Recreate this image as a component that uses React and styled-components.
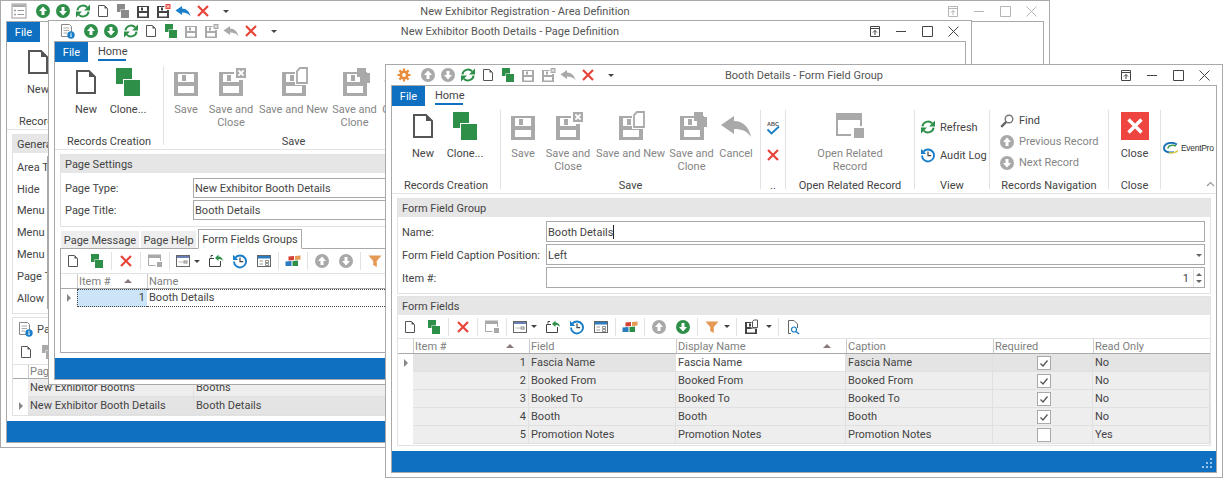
import React from "react";
import styled, { createGlobalStyle } from "styled-components";

const GlobalStyle = createGlobalStyle`
  html, body { margin: 0; padding: 0; background: #fff; }
  body { font-family: Roboto, "Noto Sans", sans-serif; font-size: 11px; color: #444; }
  * { box-sizing: border-box; }
`;

const BLUE = "#0f6fc0";
const GREEN = "#2e8f49";
const GREY = "#a9a9a9";
const DARK = "#555";
const RED = "#e8443a";

// --- icons, all in a 16x16 box ---
const floppy = (c) => (
  <>
    <path fill={c} fillRule="evenodd" d="M2 3h12v12H2z M4 4h8v4H4z M4 10h8v3.5H4z" />
    <rect x="6" y="4.5" width="2" height="3" fill={c} />
  </>
);
const circleArrow = (c, down) => (
  <>
    <circle cx="8" cy="8" r="7" fill={c} />
    <path fill="#fff" d={down ? "M8 12.5L12 8H9.5V4h-3v4H4z" : "M8 3.5L12 8H9.5v4h-3V8H4z"} />
  </>
);
const icons = {
  doc: (c = DARK) => (
    <>
      <path d="M3.5 2.5H9.5L12.5 5.5V13.5H3.5Z" fill="#fff" stroke={c} strokeWidth="1" />
      <path d="M9.5 2.5V5.5H12.5Z" fill={c} />
    </>
  ),
  clone: (c = GREEN) => (
    <>
      <rect x="2" y="1" width="8" height="8" fill={c} />
      <rect x="5.5" y="6.5" width="9" height="9" fill="#fff" />
      <rect x="6" y="7" width="8" height="8" fill={c} />
    </>
  ),
  save: (c = GREY) => floppy(c),
  saveClose: (c = GREY) => (
    <>
      {floppy(c)}
      <rect x="9.5" y="0.5" width="7" height="6.5" fill="#fff" />
      <rect x="10.5" y="1" width="5" height="5" fill={c} />
      <path d="M11.7 2.2l2.6 2.6M14.3 2.2l-2.6 2.6" stroke="#fff" strokeWidth="1" />
    </>
  ),
  saveCloseRed: () => (
    <>
      {floppy("#444")}
      <rect x="9.5" y="0.5" width="7" height="6.5" fill="#fff" />
      <rect x="10.5" y="1" width="5" height="5" fill={RED} />
      <path d="M11.7 2.2l2.6 2.6M14.3 2.2l-2.6 2.6" stroke="#fff" strokeWidth="1" />
    </>
  ),
  saveNew: (c = GREY) => (
    <>
      {floppy(c)}
      <rect x="8.5" y="0" width="7.5" height="9.5" fill="#fff" />
      <path d="M9.5 8.5V2.5L11 1H14.5V8.5Z" fill="#fff" stroke={c} strokeWidth="0.9" />
    </>
  ),
  saveClone: (c = GREY) => (
    <>
      {floppy(c)}
      <rect x="9" y="1" width="4.5" height="4.5" fill={c} />
      <rect x="10.5" y="3.5" width="5" height="5" fill={c} />
    </>
  ),
  reply: (c = GREY) => (
    <path fill={c} d="M0.5 7.5L7 3V5.5C11.5 5.5 14.5 8.5 15.5 13.5C13.5 10.5 11 9.5 7 9.5V12Z" />
  ),
  x: (c = RED) => <path d="M3 3L13 13M13 3L3 13" stroke={c} strokeWidth="2.2" fill="none" />,
  up: (c = GREEN) => circleArrow(c, false),
  down: (c = GREEN) => circleArrow(c, true),
  refresh: (c = GREEN) => (
    <>
      <path d="M2.4 7.4A5.7 5.7 0 0 1 12.2 4.4M13.6 8.6A5.7 5.7 0 0 1 3.8 11.6" stroke={c} strokeWidth="2" fill="none" />
      <path fill={c} d="M15 1.5V7.5H9ZM1 14.5V8.5H7Z" />
    </>
  ),
  clock: () => (
    <>
      <path d="M3.4 4.6A6 6 0 1 1 2 8.5" stroke="#1a7fc8" strokeWidth="1.9" fill="none" />
      <path fill="#1a7fc8" d="M1 1.8V7H6.2Z" />
      <path d="M8 4.5V8.7H11.2" stroke="#444" strokeWidth="1.2" fill="none" />
    </>
  ),
  find: () => (
    <>
      <circle cx="10" cy="6" r="3.8" fill="none" stroke="#777" strokeWidth="1.4" />
      <path d="M7.2 8.8L2.2 13.8" stroke="#666" strokeWidth="2.4" />
    </>
  ),
  related: (c = GREY) => (
    <>
      <rect x="1" y="1.5" width="13" height="3.5" fill={c} />
      <path d="M1.5 5V12.5H8.5M13.5 5V8" stroke={c} strokeWidth="1" fill="none" />
      <rect x="10" y="9" width="5" height="5" fill={c} />
    </>
  ),
  tabWin: () => (
    <>
      <rect x="1.5" y="2.5" width="13" height="11" fill="#fff" stroke="#666" />
      <rect x="2" y="3" width="12" height="2" fill="#6a7fb5" />
      <rect x="9" y="8" width="3" height="2" fill="none" stroke="#888" />
      <path d="M3.5 9H8" stroke="#bbb" />
    </>
  ),
  exportTo: () => (
    <>
      <path d="M1.5 5.5V13.5H12.5V8M1.5 5.5H6" stroke="#444" fill="none" />
      <path d="M3 4.5V2.5H5" stroke="#444" fill="none" />
      <path fill={GREEN} d="M7 5L10.5 1.5V3.5C13 3.5 14.5 5 15 8C13.8 6.5 12.5 6 10.5 6V8Z" />
    </>
  ),
  list: () => (
    <>
      <rect x="1.5" y="2.5" width="13" height="11" fill="#fff" stroke="#666" />
      <rect x="2" y="3" width="12" height="2.5" fill="#2a7bc0" />
      <path d="M3.5 8H7M3.5 11H7" stroke="#999" />
      <path d="M9.5 7.5h3v2h-3zM9.5 10.5h3v2h-3z" fill="none" stroke="#777" strokeWidth="0.8" />
    </>
  ),
  blocks: () => (
    <>
      <path fill="#d43f33" d="M3.5 3.5L9 3V7L3.5 7.5Z" />
      <path fill="#e59a53" d="M10 3L15.5 2.5V6.5L10 7Z" />
      <path fill="#2a7bc0" d="M0.5 8.5L6.5 8V13H0.5Z" />
      <path fill={GREEN} d="M7.5 8L13 7.5V13H7.5Z" />
    </>
  ),
  filter: () => <path fill="#e59a53" d="M1.5 2.5H14.5L9.8 8V14L6.2 12V8Z" />,
  searchDoc: () => (
    <>
      <path d="M3.5 1.5H9L12.5 5V9M6 14.5H3.5V1.5" fill="none" stroke="#666" />
      <circle cx="9" cy="10.5" r="2.5" fill="#fff" stroke="#1a7fc8" strokeWidth="1.2" />
      <path d="M11 12.5L14 15" stroke="#1a7fc8" strokeWidth="1.5" />
    </>
  ),
  form: () => (
    <>
      <rect x="1" y="1" width="14" height="14" fill="#fff" stroke="#999" />
      <rect x="1.5" y="1.5" width="13" height="2.5" fill="#aaa" />
      <circle cx="4" cy="7.5" r="1" fill="#999" />
      <circle cx="4" cy="11.5" r="1" fill="#999" />
      <path d="M6.5 7.5H13M6.5 11.5H13" stroke="#999" />
    </>
  ),
  pageInfo: () => (
    <>
      <path d="M2.5 1.5H10.5L12.5 3.5V13.5H2.5Z" fill="#fff" stroke="#888" />
      <path d="M4.5 5H10M4.5 7.5H10M4.5 10H8" stroke="#aaa" />
      <circle cx="12" cy="12" r="3.7" fill="#1a7fc8" />
      <path d="M12 11.3V14M12 9.7V10.7" stroke="#fff" strokeWidth="1.1" />
    </>
  ),
  gear: () => (
    <>
      <path d="M8 1.5V14.5M1.5 8H14.5M3.4 3.4L12.6 12.6M12.6 3.4L3.4 12.6" stroke="#e88d3d" strokeWidth="2.2" />
      <circle cx="8" cy="8" r="4.6" fill="#e88d3d" />
      <circle cx="8" cy="8" r="1.9" fill="#fff" />
    </>
  ),
  spell: () => (
    <>
      <text x="8" y="6" textAnchor="middle" fontSize="5.5" fontWeight="700" fontFamily="Liberation Sans" fill="#555">ABC</text>
      <path d="M2.5 9.5L6.5 13.5L14 6.5" stroke="#1a7fc8" strokeWidth="1.8" fill="none" />
    </>
  ),
};

const IconSvg = styled.svg`
  display: block;
  flex: none;
`;

const Icon = ({ name, size = 16, color }) => (
  <IconSvg width={size} height={size} viewBox="0 0 16 16">
    {icons[name](color)}
  </IconSvg>
);

// --- desktop and windows ---
const Desktop = styled.div`
  position: relative;
  width: 1223px;
  height: 479px;
  overflow: hidden;
`;

const Win = styled.div`
  position: absolute;
  left: ${(p) => p.$left}px;
  top: ${(p) => p.$top}px;
  width: ${(p) => p.$width}px;
  height: ${(p) => p.$height}px;
  background: #fff;
  border: 1px solid ${GREY};
  display: flex;
  flex-direction: column;
  padding: 0 5px 4px;
`;

const TitleBar = styled.div`
  height: 20px;
  flex: none;
  display: grid;
  grid-template-columns: 1fr auto 1fr;
  align-items: center;
`;

const Qat = styled.div`
  display: flex;
  align-items: center;
  padding-left: 3px;
`;

const QatBtn = styled.div`
  width: 20px;
  height: 20px;
  display: flex;
  align-items: center;
  justify-content: center;
  margin-right: ${(p) => p.$gap || 0}px;
`;

const Caret = styled.span`
  display: block;
  width: 0;
  height: 0;
  border-left: 3.5px solid transparent;
  border-right: 3.5px solid transparent;
  border-top: 3.5px solid #444;
`;

const QatCaret = styled.div`
  width: 20px;
  margin-left: 3px;
  display: flex;
  justify-content: center;
`;

const TitleText = styled.div`
  color: #555;
  white-space: nowrap;
`;

const WinBtns = styled.div`
  justify-self: end;
  display: flex;
  color: ${(p) => (p.$inactive ? "#b5b5b5" : "#444")};
`;

const WinBtn = styled.div`
  width: 26px;
  height: 20px;
  display: flex;
  align-items: center;
  justify-content: center;
`;

const Frame = styled.div`
  flex: 1;
  min-height: 0;
  border: 1px solid ${GREY};
  display: flex;
  flex-direction: column;
  overflow: hidden;
`;

const StatusBar = styled.div`
  height: 21px;
  flex: none;
  margin-top: auto;
  background: ${BLUE};
  display: flex;
  justify-content: flex-end;
  align-items: flex-end;
  padding: 0 3px 3px 0;
`;

// --- ribbon ---
const Tabs = styled.div`
  height: 20px;
  flex: none;
  display: flex;
`;

const FileTab = styled.div`
  width: 33px;
  background: ${BLUE};
  color: #fff;
  display: flex;
  align-items: center;
  justify-content: center;
`;

const HomeTab = styled.div`
  margin-left: 10px;
  width: 28px;
  height: 19px;
  line-height: 19px;
  text-align: center;
  color: #444;
  border-bottom: 2px solid ${BLUE};
`;

const RibbonBar = styled.div`
  height: 88px;
  flex: none;
  padding-top: 4px;
  display: flex;
  border-bottom: 1px solid #e2e2e2;
`;

const Group = styled.div`
  width: ${(p) => p.$w}px;
  height: 79px;
  flex: none;
  display: flex;
  flex-direction: column;
  border-right: ${(p) => (p.$last ? "none" : "1px solid #e2e2e2")};
`;

const GroupBody = styled.div`
  height: 68px;
  flex: none;
  display: flex;
  flex-direction: ${(p) => (p.$stack ? "column" : "row")};
  padding-left: ${(p) => p.$pad || 0}px;
  padding-top: ${(p) => p.$top || 0}px;
`;

const GroupCaption = styled.div`
  height: 11px;
  line-height: 16px;
  text-align: center;
  white-space: nowrap;
  color: #444;
  position: relative;
`;

const LargeBtn = styled.div`
  width: ${(p) => p.$w}px;
  flex: none;
  display: flex;
  flex-direction: column;
  align-items: center;
`;

const LargeLabel = styled.div`
  margin-top: 5px;
  line-height: 13px;
  text-align: center;
  white-space: pre;
  color: ${(p) => (p.$off ? "#858585" : "#444")};
`;

const SmallBtn = styled.div`
  height: ${(p) => p.$h}px;
  display: flex;
  align-items: center;
  gap: 4px;
  white-space: nowrap;
  justify-content: ${(p) => (p.$only ? "center" : "flex-start")};
  color: ${(p) => (p.$off ? "#858585" : "#444")};
`;

const LogoBox = styled.div`
  display: flex;
  align-items: center;
  gap: 1px;
  height: 20px;
  margin-top: 28px;
  padding-left: 2px;
`;

const LogoMark = styled.svg`
  flex: none;
`;

const LogoText = styled.span`
  font-family: "Liberation Sans", sans-serif;
  font-size: 8.5px;
  letter-spacing: -0.3px;
  color: #333;
`;

const CloseMark = styled.svg`
  display: block;
`;

const Collapse = styled.svg`
  position: absolute;
  right: 1px;
  top: 3px;
`;

const saveButtons = [
  ["save", "Save", 44],
  ["saveClose", "Save and\nClose", 46],
  ["saveNew", "Save and New", 79],
  ["saveClone", "Save and\nClone", 43],
  ["reply", "Cancel", 46],
];

const Ribbon = ({ full, noSave }) => (
  <>
    <Tabs>
      <FileTab>File</FileTab>
      <HomeTab>Home</HomeTab>
    </Tabs>
    <RibbonBar>
      <Group $w={109}>
        <GroupBody $pad={10}>
          <LargeBtn $w={42}>
            <Icon name="doc" size={32} />
            <LargeLabel>New</LargeLabel>
          </LargeBtn>
          <LargeBtn $w={42}>
            <Icon name="clone" size={32} />
            <LargeLabel>Clone...</LargeLabel>
          </LargeBtn>
        </GroupBody>
        <GroupCaption>Records Creation</GroupCaption>
      </Group>
      {!noSave && (
        <Group $w={260}>
          <GroupBody>
            {saveButtons.map(([name, label, w]) => (
              <LargeBtn key={name} $w={w}>
                <Icon name={name} size={32} />
                <LargeLabel $off>{label}</LargeLabel>
              </LargeBtn>
            ))}
          </GroupBody>
          <GroupCaption>Save</GroupCaption>
        </Group>
      )}
      {full && (
        <>
          <Group $w={25}>
            <GroupBody $stack $top={4}>
              <SmallBtn $h={28} $only><Icon name="spell" /></SmallBtn>
              <SmallBtn $h={26} $only><Icon name="x" /></SmallBtn>
            </GroupBody>
            <GroupCaption>..</GroupCaption>
          </Group>
          <Group $w={129}>
            <GroupBody>
              <LargeBtn $w={128}>
                <Icon name="related" size={32} />
                <LargeLabel $off>{"Open Related\nRecord"}</LargeLabel>
              </LargeBtn>
            </GroupBody>
            <GroupCaption>Open Related Record</GroupCaption>
          </Group>
          <Group $w={75}>
            <GroupBody $stack $pad={5} $top={3}>
              <SmallBtn $h={28}><Icon name="refresh" />Refresh</SmallBtn>
              <SmallBtn $h={28}><Icon name="clock" />Audit Log</SmallBtn>
            </GroupBody>
            <GroupCaption>View</GroupCaption>
          </Group>
          <Group $w={119}>
            <GroupBody $stack $pad={9}>
              <SmallBtn $h={21}><Icon name="find" />Find</SmallBtn>
              <SmallBtn $h={21} $off><Icon name="up" color={GREY} />Previous Record</SmallBtn>
              <SmallBtn $h={21} $off><Icon name="down" color={GREY} />Next Record</SmallBtn>
            </GroupBody>
            <GroupCaption>Records Navigation</GroupCaption>
          </Group>
          <Group $w={52}>
            <GroupBody>
              <LargeBtn $w={51}>
                <CloseMark width="32" height="32" viewBox="0 0 32 32">
                  <rect x="2" y="2" width="28" height="28" fill="#ee4540" />
                  <path d="M9.5 9.5L22.5 22.5M22.5 9.5L9.5 22.5" stroke="#fff" strokeWidth="3.4" />
                </CloseMark>
                <LargeLabel>Close</LargeLabel>
              </LargeBtn>
            </GroupBody>
            <GroupCaption>Close</GroupCaption>
          </Group>
          <Group $w={55} $last>
            <GroupBody $stack>
              <LogoBox>
                <LogoMark width="17" height="12" viewBox="0 0 17 12">
                  <path d="M14 2.5C10 -0.5 2 0.5 1 5.5C0.5 9 5 11.5 11 10" fill="none" stroke="#1e73b8" strokeWidth="1.8" />
                  <path d="M5 6.5C5 3.5 10 2.5 13 4" fill="none" stroke="#3f9a4a" strokeWidth="1.6" />
                  <path d="M6 10.5C9 11.5 13 10.5 15 8.5" fill="none" stroke="#d8c33a" strokeWidth="1.4" />
                </LogoMark>
                <LogoText>EventPro</LogoText>
              </LogoBox>
            </GroupBody>
            <GroupCaption>
              <Collapse width="9" height="6" viewBox="0 0 9 6">
                <path d="M1 5L4.5 1.5L8 5" fill="none" stroke="#999" strokeWidth="1.2" />
              </Collapse>
            </GroupCaption>
          </Group>
        </>
      )}
    </RibbonBar>
  </>
);

// --- panels and forms ---
const Body = styled.div`
  flex: 1;
  min-height: 0;
  display: flex;
  flex-direction: column;
  gap: ${(p) => p.$gap || 0}px;
  padding: 4px 5px 5px;
`;

const Panel = styled.div`
  flex: ${(p) => (p.$grow ? 1 : "none")};
  height: ${(p) => (p.$h ? `${p.$h}px` : "auto")};
  border: 1px solid #e2e2e2;
  display: flex;
  flex-direction: column;
  overflow: hidden;
`;

const PanelHead = styled.div`
  height: 18px;
  flex: none;
  background: #e6e6e6;
  line-height: 19px;
  padding-left: 4px;
  color: #444;
  white-space: nowrap;
`;

const FormGrid = styled.div`
  display: grid;
  grid-template-columns: ${(p) => p.$label}px 1fr;
  row-gap: ${(p) => p.$gap}px;
  padding: ${(p) => p.$top}px 5px ${(p) => p.$bottom}px 4px;
  align-items: center;
`;

const FieldLabel = styled.div`
  white-space: nowrap;
  overflow: hidden;
  padding-top: 1px;
`;

const Input = styled.div`
  height: ${(p) => p.$h || 21}px;
  border: 1px solid ${GREY};
  padding: 1px 0 0 1px;
  color: #444;
  display: flex;
  align-items: center;
`;

const TextCaret = styled.span`
  display: inline-block;
  width: 1px;
  height: 14px;
  background: #222;
`;

const InputEnd = styled.div`
  margin-left: auto;
  display: flex;
  align-items: center;
  height: 100%;
`;

const Spin = styled.div`
  width: 11px;
  height: 100%;
  margin-left: 4px;
  border-left: ${(p) => (p.$plain ? "none" : "1px solid #e2e2e2")};
  display: flex;
  flex-direction: column;
  align-items: center;
  justify-content: ${(p) => (p.$plain ? "center" : "space-around")};
  padding: 2px 0;
`;

const SpinUp = styled.span`
  border-left: 3px solid transparent;
  border-right: 3px solid transparent;
  border-bottom: 3px solid #666;
`;

const SpinDown = styled.span`
  border-left: 3px solid transparent;
  border-right: 3px solid transparent;
  border-top: 3px solid #666;
`;

const TabStrip = styled.div`
  display: flex;
  align-items: flex-end;
  height: 18px;
  flex: none;
  margin-top: 3px;
  padding-left: 1px;
`;

const PageTab = styled.div`
  width: ${(p) => p.$w}px;
  height: ${(p) => (p.$on ? 20 : 17)}px;
  line-height: 19px;
  text-align: center;
  margin-right: ${(p) => (p.$on ? 0 : 2)}px;
  margin-bottom: ${(p) => (p.$on ? -1 : 0)}px;
  background: ${(p) => (p.$on ? "#fff" : "#eee")};
  border: ${(p) => (p.$on ? `1px solid ${GREY}` : "none")};
  border-bottom: ${(p) => (p.$on ? "1px solid #fff" : "none")};
  position: relative;
  white-space: nowrap;
`;

const TabPage = styled.div`
  flex: 1;
  min-height: 0;
  border: 1px solid ${GREY};
  overflow: hidden;
`;

// --- toolbar ---
const ToolRow = styled.div`
  height: ${(p) => p.$h}px;
  flex: none;
  display: flex;
  align-items: center;
  white-space: nowrap;
`;

const ToolBtn = styled.div`
  width: ${(p) => p.$w || 24}px;
  height: 18px;
  flex: none;
  display: flex;
  align-items: center;
  justify-content: center;
`;

const ToolSep = styled.div`
  width: 5px;
  height: 18px;
  flex: none;
  display: flex;
  justify-content: center;
  &::before {
    content: "";
    width: 1px;
    background: #e2e2e2;
  }
`;

const ToolCaret = styled.div`
  width: 6px;
  flex: none;
  margin: 0 4px 0 ${(p) => p.$ml || 0}px;
  display: flex;
  justify-content: center;
`;

const GridToolbar = ({ h, downOn }) => (
  <ToolRow $h={h}>
    <ToolBtn><Icon name="doc" /></ToolBtn>
    <ToolBtn><Icon name="clone" /></ToolBtn>
    <ToolSep />
    <ToolBtn><Icon name="x" /></ToolBtn>
    <ToolSep />
    <ToolBtn><Icon name="related" /></ToolBtn>
    <ToolSep />
    <ToolBtn $w={22}><Icon name="tabWin" /></ToolBtn>
    <ToolCaret><Caret /></ToolCaret>
    <ToolBtn><Icon name="exportTo" /></ToolBtn>
    <ToolBtn><Icon name="clock" /></ToolBtn>
    <ToolBtn><Icon name="list" /></ToolBtn>
    <ToolSep />
    <ToolBtn><Icon name="blocks" /></ToolBtn>
    <ToolSep />
    <ToolBtn><Icon name="up" color={GREY} /></ToolBtn>
    <ToolBtn><Icon name="down" color={downOn ? GREEN : GREY} /></ToolBtn>
    <ToolSep />
    <ToolBtn><Icon name="filter" /></ToolBtn>
    <ToolCaret><Caret /></ToolCaret>
    <ToolSep />
    <ToolBtn><Icon name="saveNew" color="#444" /></ToolBtn>
    <ToolCaret $ml={3}><Caret /></ToolCaret>
    <ToolSep />
    <ToolBtn><Icon name="searchDoc" /></ToolBtn>
  </ToolRow>
);

// --- data grid ---
const GridHead = styled.div`
  display: grid;
  grid-template-columns: ${(p) => p.$cols};
  height: 16px;
  border-bottom: 1px solid ${GREY};
  border-top: 1px solid #e2e2e2;
  color: #808080;
`;

const HeadCell = styled.div`
  display: flex;
  align-items: center;
  justify-content: space-between;
  padding: 0 ${(p) => (p.$sort ? 15 : 0)}px 0 1px;
  line-height: 13px;
  white-space: nowrap;
  overflow: hidden;
  border-left: ${(p) => (p.$first ? "none" : "1px solid #ccc")};
`;

const SortUp = styled.span`
  border-left: 4px solid transparent;
  border-right: 4px solid transparent;
  border-bottom: 4px solid #8a7a7a;
`;

const GridRow = styled.div`
  display: grid;
  grid-template-columns: ${(p) => p.$cols};
  height: 18px;
`;

const Marker = styled.div`
  background: #fff;
  display: flex;
  align-items: center;
  justify-content: center;
  &::before {
    content: "";
    display: ${(p) => (p.$on ? "block" : "none")};
    border-top: 4px solid transparent;
    border-bottom: 4px solid transparent;
    border-left: 4px solid #888;
  }
`;

const Cell = styled.div`
  background: ${(p) => (p.$white ? "#fff" : p.$sel ? "#e4e4e4" : "#eee")};
  border-right: 1px solid #e0e0e0;
  border-bottom: 1px solid #e0e0e0;
  line-height: 17px;
  padding: 0 ${(p) => (p.$right ? 2 : 0)}px 0 ${(p) => (p.$right ? 0 : 2)}px;
  text-align: ${(p) => (p.$right ? "right" : "left")};
  color: #444;
  white-space: nowrap;
  overflow: hidden;
`;

const CheckCell = styled(Cell)`
  display: flex;
  align-items: center;
  justify-content: center;
`;

const CheckBox = styled.div`
  width: 14px;
  height: 14px;
  background: #fff;
  border: 1px solid ${GREY};
  display: flex;
  align-items: center;
  justify-content: center;
`;

const ActiveCell = styled.div`
  background: ${(p) => (p.$blue ? "#cce4f7" : "#fff")};
  border-top: 1px dotted #444;
  border-bottom: 1px dotted #444;
  border-left: ${(p) => (p.$blue ? "1px dotted #444" : "none")};
  line-height: 15px;
  padding: 0 ${(p) => (p.$blue ? 2 : 0)}px 0 ${(p) => (p.$blue ? 0 : 2)}px;
  text-align: ${(p) => (p.$blue ? "right" : "left")};
  white-space: nowrap;
`;

const fieldCols = "15px 116px 147px 170px 147px 100px 1fr";
const fieldRows = [
  [1, "Fascia Name", "Fascia Name", "Fascia Name", true, "No"],
  [2, "Booked From", "Booked From", "Booked From", true, "No"],
  [3, "Booked To", "Booked To", "Booked To", true, "No"],
  [4, "Booth", "Booth", "Booth", true, "No"],
  [5, "Promotion Notes", "Promotion Notes", "Promotion Notes", false, "Yes"],
];

const WinButtons = ({ inactive }) => (
  <WinBtns $inactive={inactive}>
    <WinBtn>
      <svg width="12" height="11" viewBox="0 0 12 11" fill="none" stroke="currentColor">
        <path d="M1.5 .5H10.5V10.5H1.5ZM1.5 2.5H10.5" />
        <path d="M6 9V4.5M4 6.5L6 4.5L8 6.5" />
      </svg>
    </WinBtn>
    <WinBtn>
      <svg width="12" height="11" viewBox="0 0 12 11" stroke="currentColor"><path d="M1 5.5H11" /></svg>
    </WinBtn>
    <WinBtn>
      <svg width="11" height="11" viewBox="0 0 11 11" fill="none" stroke="currentColor"><path d="M.5 .5H10.5V10.5H.5Z" /></svg>
    </WinBtn>
    <WinBtn>
      <svg width="11" height="11" viewBox="0 0 11 11" stroke="currentColor"><path d="M.5 .5L10.5 10.5M10.5 .5L.5 10.5" /></svg>
    </WinBtn>
  </WinBtns>
);

const Title = ({ app, items, text, inactive }) => (
  <TitleBar>
    <Qat>
      <QatBtn $gap={4}><Icon name={app} /></QatBtn>
      {items.map(([name, color], i) => (
        <QatBtn key={i}><Icon name={name} color={color} /></QatBtn>
      ))}
      <QatCaret><Caret /></QatCaret>
    </Qat>
    <TitleText>{text}</TitleText>
    <WinButtons inactive={inactive} />
  </TitleBar>
);

const Grip = () => (
  <svg width="11" height="11" viewBox="0 0 11 11" fill="#9cc3e6">
    <rect x="8" y="0" width="2" height="2" />
    <rect x="4" y="4" width="2" height="2" />
    <rect x="8" y="4" width="2" height="2" />
    <rect x="0" y="8" width="2" height="2" />
    <rect x="4" y="8" width="2" height="2" />
    <rect x="8" y="8" width="2" height="2" />
  </svg>
);

const areaLabels = ["Area Type:", "Hide", "Menu Caption:", "Menu Title:", "Menu Icon:", "Page Title:", "Allow Edit:"];

export default function App() {
  return (
    <Desktop>
      <GlobalStyle />

      {/* back window */}
      <Win $left={0} $top={0} $width={1050} $height={448}>
        <Title
          app="form"
          text="New Exhibitor Registration - Area Definition"
          inactive
          items={[
            ["up"], ["down"], ["refresh"], ["doc"], ["clone", "#8a8a8a"], ["save", "#444"],
            ["saveCloseRed"], ["reply", "#1a7fc8"], ["x"],
          ]}
        />
        <Frame>
          <Ribbon noSave />
          <Body $gap={3}>
            <Panel $h={180}>
              <PanelHead>General</PanelHead>
              <FormGrid $label={30} $gap={0} $top={3} $bottom={0}>
                {areaLabels.map((l) => (
                  <React.Fragment key={l}>
                    <FieldLabel>{l}</FieldLabel>
                    <Input $h={21.8} />
                  </React.Fragment>
                ))}
              </FormGrid>
            </Panel>
            <Panel $grow>
              <ToolRow $h={22}>
                <ToolBtn $w={24}><Icon name="pageInfo" /></ToolBtn>
                Pages
              </ToolRow>
              <ToolRow $h={24}>
                <ToolBtn $w={26}><Icon name="doc" /></ToolBtn>
                <ToolBtn $w={18}><Icon name="clone" color={GREY} /></ToolBtn>
              </ToolRow>
              <GridHead $cols="15px 166px 1fr">
                <HeadCell $first />
                <HeadCell>Page Type</HeadCell>
                <HeadCell>Page Title</HeadCell>
              </GridHead>
              <GridRow $cols="15px 166px 1fr">
                <Marker />
                <Cell>New Exhibitor Booths</Cell>
                <Cell>Booths</Cell>
              </GridRow>
              <GridRow $cols="15px 166px 1fr">
                <Marker $on />
                <Cell $sel>New Exhibitor Booth Details</Cell>
                <Cell $sel>Booth Details</Cell>
              </GridRow>
            </Panel>
          </Body>
          <StatusBar />
        </Frame>
      </Win>

      {/* middle window */}
      <Win $left={48} $top={20} $width={924} $height={365}>
        <Title
          app="pageInfo"
          text="New Exhibitor Booth Details - Page Definition"
          items={[
            ["up"], ["down"], ["refresh"], ["doc"], ["clone"], ["save", GREY],
            ["saveClose", GREY], ["reply", GREY], ["x"],
          ]}
        />
        <Frame>
          <Ribbon />
          <Body>
            <Panel>
              <PanelHead>Page Settings</PanelHead>
              <FormGrid $label={128} $gap={2} $top={5} $bottom={6}>
                <FieldLabel>Page Type:</FieldLabel>
                <Input $h={20}>New Exhibitor Booth Details</Input>
                <FieldLabel>Page Title:</FieldLabel>
                <Input $h={20}>Booth Details</Input>
              </FormGrid>
            </Panel>
            <TabStrip>
              <PageTab $w={78}>Page Message</PageTab>
              <PageTab $w={55}>Page Help</PageTab>
              <PageTab $on $w={104}>Form Fields Groups</PageTab>
            </TabStrip>
            <TabPage>
              <GridToolbar h={24} />
              <GridHead $cols="16px 70px 1fr">
                <HeadCell $first />
                <HeadCell $sort>Item #<SortUp /></HeadCell>
                <HeadCell>Name</HeadCell>
              </GridHead>
              <GridRow $cols="16px 70px 1fr">
                <Marker $on />
                <ActiveCell $blue>1</ActiveCell>
                <ActiveCell>Booth Details</ActiveCell>
              </GridRow>
            </TabPage>
          </Body>
          <StatusBar />
        </Frame>
      </Win>

      {/* front window */}
      <Win $left={385} $top={64} $width={838} $height={414}>
        <Title
          app="gear"
          text="Booth Details - Form Field Group"
          items={[
            ["up", GREY], ["down", GREY], ["refresh"], ["doc"], ["clone"], ["save", GREY],
            ["saveClose", GREY], ["reply", GREY], ["x"],
          ]}
        />
        <Frame>
          <Ribbon full />
          <Body $gap={2}>
            <Panel>
              <PanelHead>Form Field Group</PanelHead>
              <FormGrid $label={144} $gap={2} $top={4} $bottom={5}>
                <FieldLabel>Name:</FieldLabel>
                <Input>Booth Details<TextCaret /></Input>
                <FieldLabel>Form Field Caption Position:</FieldLabel>
                <Input>
                  Left
                  <InputEnd><Spin $plain><SpinDown /></Spin></InputEnd>
                </Input>
                <FieldLabel>Item #:</FieldLabel>
                <Input>
                  <InputEnd>1<Spin><SpinUp /><SpinDown /></Spin></InputEnd>
                </Input>
              </FormGrid>
            </Panel>
            <Panel $grow>
              <PanelHead>Form Fields</PanelHead>
              <GridToolbar h={23} downOn />
              <GridHead $cols={fieldCols}>
                <HeadCell $first />
                <HeadCell $sort>Item #<SortUp /></HeadCell>
                <HeadCell>Field</HeadCell>
                <HeadCell $sort>Display Name<SortUp /></HeadCell>
                <HeadCell>Caption</HeadCell>
                <HeadCell>Required</HeadCell>
                <HeadCell>Read Only</HeadCell>
              </GridHead>
              {fieldRows.map(([n, field, display, caption, req, ro], i) => (
                <GridRow key={n} $cols={fieldCols}>
                  <Marker $on={i === 0} />
                  <Cell $right $sel={i === 0}>{n}</Cell>
                  <Cell $sel={i === 0}>{field}</Cell>
                  <Cell $white={i === 0}>{display}</Cell>
                  <Cell $sel={i === 0}>{caption}</Cell>
                  <CheckCell $sel={i === 0}>
                    <CheckBox>
                      {req && (
                        <svg width="10" height="10" viewBox="0 0 10 10">
                          <path d="M1.5 5.5L4 8L8.5 2.5" fill="none" stroke="#555" strokeWidth="1.3" />
                        </svg>
                      )}
                    </CheckBox>
                  </CheckCell>
                  <Cell $sel={i === 0}>{ro}</Cell>
                </GridRow>
              ))}
            </Panel>
          </Body>
          <StatusBar><Grip /></StatusBar>
        </Frame>
      </Win>
    </Desktop>
  );
}
